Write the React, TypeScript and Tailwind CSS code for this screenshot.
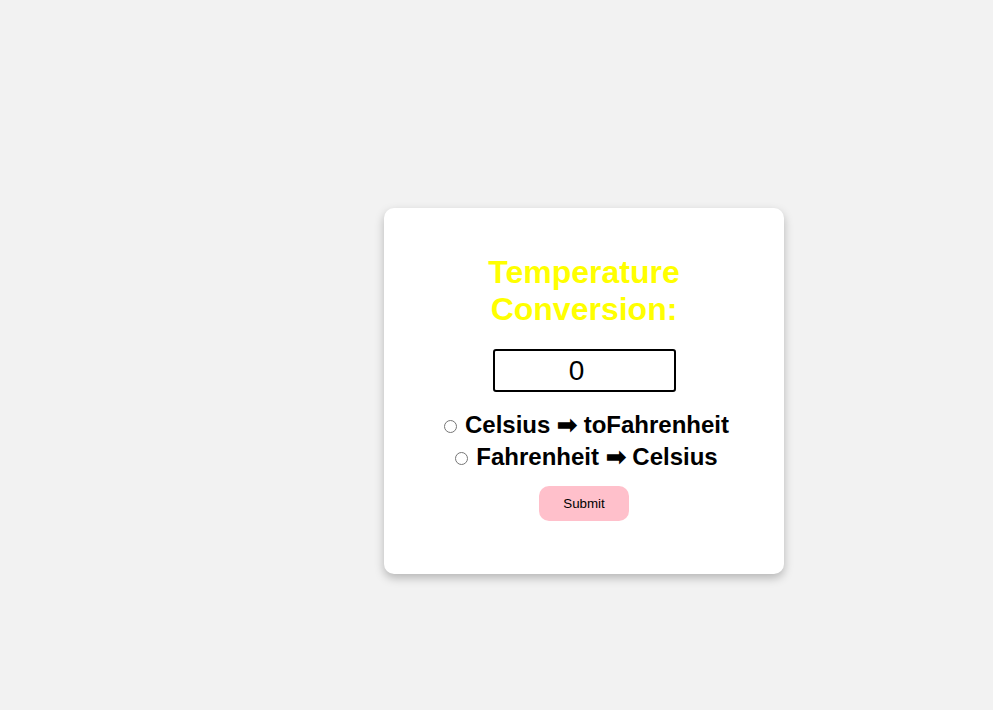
import { useState } from "react"

export default function App() {
  const [value, setValue] = useState("0")
  const [mode, setMode] = useState("")

  return (
    <div className="min-h-screen bg-[#f2f2f2] pt-[208px] pl-[384px] font-['Liberation_Sans',Arial,sans-serif]">
      <div className="w-[400px] rounded-[10px] bg-white px-[40px] pt-[46px] pb-[53px] shadow-[0_4px_10px_rgba(0,0,0,0.25)] flex flex-col items-center text-center">
        <h1 className="text-[32px] leading-[37px] font-bold text-[#ffff00] w-[240px]">
          Temperature Conversion:
        </h1>

        <input
          type="number"
          value={value}
          onChange={(e) => setValue(e.target.value)}
          className="mt-[21px] w-[183px] h-[43px] border-2 border-black rounded-[3px] text-center text-[28px] text-black px-1 outline-none"
        />

        <div className="mt-[17px] text-[24px] leading-[32px] font-bold text-black">
          <label className="block whitespace-nowrap">
            <input
              type="radio"
              name="mode"
              checked={mode === "c"}
              onChange={() => setMode("c")}
              className="mr-[8px] ml-[5px] mt-[3px] align-baseline"
            />
            Celsius ➡ toFahrenheit
          </label>
          <label className="block whitespace-nowrap">
            <input
              type="radio"
              name="mode"
              checked={mode === "f"}
              onChange={() => setMode("f")}
              className="mr-[8px] ml-[5px] mt-[3px] align-baseline"
            />
            Fahrenheit ➡ Celsius
          </label>
        </div>

        <button className="mt-[13px] w-[90px] h-[35px] rounded-[10px] bg-[#ffc0cb] text-[13.33px] text-black">
          Submit
        </button>
      </div>
    </div>
  )
}
